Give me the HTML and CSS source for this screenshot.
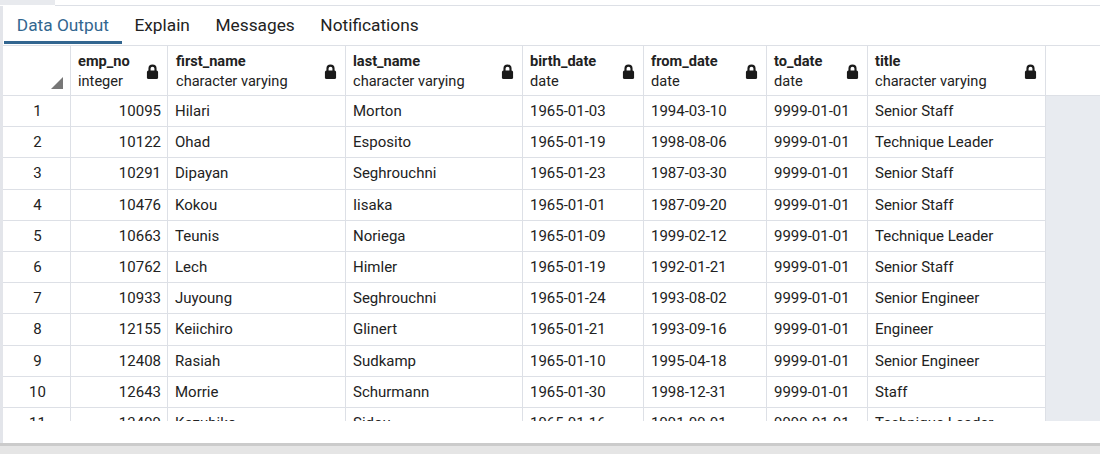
FILE: index.html
```html
<!DOCTYPE html>
<html>
<head>
<meta charset="utf-8">
<link rel="stylesheet" href="styles.css">
</head>
<body>
<div class="app">
  <div class="topbar"><div class="corner"></div><div class="topline"></div></div>
  <div class="main">
    <div class="strip"></div>
    <div class="panel">
      <div class="tabs">
        <div class="tab active">Data Output</div>
        <div class="tab">Explain</div>
        <div class="tab">Messages</div>
        <div class="tab">Notifications</div>
      </div>
      <div class="grid">
        <div class="hrow">
          <div class="hc rn"><span class="sort"></span></div>
          <div class="hc"><div class="ht"><b>emp_no</b><span>integer</span></div><svg class="lock" viewBox="0 0 12 14"><path d="M3.2 6.5V4.3a2.8 2.8 0 0 1 5.6 0V6.5" fill="none" stroke="#1a1a1a" stroke-width="2"/><rect x="0.8" y="6" width="10.4" height="8" rx="1.4" fill="#1a1a1a"/></svg></div>
          <div class="hc"><div class="ht"><b>first_name</b><span>character varying</span></div><svg class="lock" viewBox="0 0 12 14"><path d="M3.2 6.5V4.3a2.8 2.8 0 0 1 5.6 0V6.5" fill="none" stroke="#1a1a1a" stroke-width="2"/><rect x="0.8" y="6" width="10.4" height="8" rx="1.4" fill="#1a1a1a"/></svg></div>
          <div class="hc"><div class="ht"><b>last_name</b><span>character varying</span></div><svg class="lock" viewBox="0 0 12 14"><path d="M3.2 6.5V4.3a2.8 2.8 0 0 1 5.6 0V6.5" fill="none" stroke="#1a1a1a" stroke-width="2"/><rect x="0.8" y="6" width="10.4" height="8" rx="1.4" fill="#1a1a1a"/></svg></div>
          <div class="hc"><div class="ht"><b>birth_date</b><span>date</span></div><svg class="lock" viewBox="0 0 12 14"><path d="M3.2 6.5V4.3a2.8 2.8 0 0 1 5.6 0V6.5" fill="none" stroke="#1a1a1a" stroke-width="2"/><rect x="0.8" y="6" width="10.4" height="8" rx="1.4" fill="#1a1a1a"/></svg></div>
          <div class="hc"><div class="ht"><b>from_date</b><span>date</span></div><svg class="lock" viewBox="0 0 12 14"><path d="M3.2 6.5V4.3a2.8 2.8 0 0 1 5.6 0V6.5" fill="none" stroke="#1a1a1a" stroke-width="2"/><rect x="0.8" y="6" width="10.4" height="8" rx="1.4" fill="#1a1a1a"/></svg></div>
          <div class="hc"><div class="ht"><b>to_date</b><span>date</span></div><svg class="lock" viewBox="0 0 12 14"><path d="M3.2 6.5V4.3a2.8 2.8 0 0 1 5.6 0V6.5" fill="none" stroke="#1a1a1a" stroke-width="2"/><rect x="0.8" y="6" width="10.4" height="8" rx="1.4" fill="#1a1a1a"/></svg></div>
          <div class="hc"><div class="ht"><b>title</b><span>character varying</span></div><svg class="lock" viewBox="0 0 12 14"><path d="M3.2 6.5V4.3a2.8 2.8 0 0 1 5.6 0V6.5" fill="none" stroke="#1a1a1a" stroke-width="2"/><rect x="0.8" y="6" width="10.4" height="8" rx="1.4" fill="#1a1a1a"/></svg></div>
          <div class="hfill"></div>
        </div>
        <div class="body">
          <div class="row"><div class="c rn">1</div><div class="c num">10095</div><div class="c">Hilari</div><div class="c">Morton</div><div class="c">1965-01-03</div><div class="c">1994-03-10</div><div class="c">9999-01-01</div><div class="c">Senior Staff</div></div>
          <div class="row"><div class="c rn">2</div><div class="c num">10122</div><div class="c">Ohad</div><div class="c">Esposito</div><div class="c">1965-01-19</div><div class="c">1998-08-06</div><div class="c">9999-01-01</div><div class="c">Technique Leader</div></div>
          <div class="row"><div class="c rn">3</div><div class="c num">10291</div><div class="c">Dipayan</div><div class="c">Seghrouchni</div><div class="c">1965-01-23</div><div class="c">1987-03-30</div><div class="c">9999-01-01</div><div class="c">Senior Staff</div></div>
          <div class="row"><div class="c rn">4</div><div class="c num">10476</div><div class="c">Kokou</div><div class="c">Iisaka</div><div class="c">1965-01-01</div><div class="c">1987-09-20</div><div class="c">9999-01-01</div><div class="c">Senior Staff</div></div>
          <div class="row"><div class="c rn">5</div><div class="c num">10663</div><div class="c">Teunis</div><div class="c">Noriega</div><div class="c">1965-01-09</div><div class="c">1999-02-12</div><div class="c">9999-01-01</div><div class="c">Technique Leader</div></div>
          <div class="row"><div class="c rn">6</div><div class="c num">10762</div><div class="c">Lech</div><div class="c">Himler</div><div class="c">1965-01-19</div><div class="c">1992-01-21</div><div class="c">9999-01-01</div><div class="c">Senior Staff</div></div>
          <div class="row"><div class="c rn">7</div><div class="c num">10933</div><div class="c">Juyoung</div><div class="c">Seghrouchni</div><div class="c">1965-01-24</div><div class="c">1993-08-02</div><div class="c">9999-01-01</div><div class="c">Senior Engineer</div></div>
          <div class="row"><div class="c rn">8</div><div class="c num">12155</div><div class="c">Keiichiro</div><div class="c">Glinert</div><div class="c">1965-01-21</div><div class="c">1993-09-16</div><div class="c">9999-01-01</div><div class="c">Engineer</div></div>
          <div class="row"><div class="c rn">9</div><div class="c num">12408</div><div class="c">Rasiah</div><div class="c">Sudkamp</div><div class="c">1965-01-10</div><div class="c">1995-04-18</div><div class="c">9999-01-01</div><div class="c">Senior Engineer</div></div>
          <div class="row"><div class="c rn">10</div><div class="c num">12643</div><div class="c">Morrie</div><div class="c">Schurmann</div><div class="c">1965-01-30</div><div class="c">1998-12-31</div><div class="c">9999-01-01</div><div class="c">Staff</div></div>
          <div class="row"><div class="c rn">11</div><div class="c num">13499</div><div class="c">Kazuhiko</div><div class="c">Sidou</div><div class="c">1965-01-16</div><div class="c">1991-09-01</div><div class="c">9999-01-01</div><div class="c">Technique Leader</div></div>
        </div>
      </div>
      <div class="spacer"></div>
    </div>
  </div>
  <div class="bottom"></div>
</div>
</body>
</html>
```

FILE: styles.css
```css
* { box-sizing: border-box; }
html, body { margin: 0; padding: 0; }
body {
  width: 1100px;
  height: 454px;
  overflow: hidden;
  background: #fff;
  font-family: Roboto, "Liberation Sans", sans-serif;
  color: #222;
}
.app { display: flex; flex-direction: column; height: 454px; }
.topbar { display: flex; height: 6px; flex: none; }
.corner { width: 55px; height: 5px; background: #e8eaee; }
.topline { flex: 1; height: 6px; border-bottom: 1px solid #dde0e6; }
.main { display: flex; height: 437px; flex: none; }
.strip { width: 3px; background: #e3e5ea; flex: none; }
.panel { flex: 1; display: flex; flex-direction: column; min-width: 0; }
.tabs {
  display: flex;
  height: 40px;
  padding-left: 1px;
  border-bottom: 1px solid #dde0e6;
  flex: none;
}
.tab {
  height: 38px;
  padding: 0 12.8px;
  font-size: 17.3px;
  line-height: 39px;
  color: #222;
  border-bottom: 3px solid transparent;
}
.tab.active { color: #326690; border-bottom-color: #326690; }
.grid { height: 375px; overflow: hidden; flex: none; }
.hrow {
  display: grid;
  grid-template-columns: 68px 97px 178px 177px 121px 123px 101px 178px 1fr;
  height: 50px;
  border-bottom: 1px solid #dde0e6;
}
.hc {
  position: relative;
  border-right: 1px solid #dde0e6;
  display: flex;
  align-items: center;
  padding: 0 8px 0 7px;
}
.hc:nth-child(3) { padding-left: 8px; }
.ht { flex: 1; display: flex; flex-direction: column; font-size: 14.6px; line-height: 20px; padding-top: 1px; white-space: nowrap; }
.ht b { font-weight: 700; }
.lock { width: 13px; height: 15px; flex: none; margin-top: 2px; }
.sort {
  position: absolute;
  right: 7px;
  bottom: 6px;
  width: 0;
  height: 0;
  border-left: 12px solid transparent;
  border-bottom: 12px solid #777;
}
.body { background: #e8ebf0; height: 325px; }
.row {
  display: grid;
  grid-template-columns: 68px 97px 178px 177px 121px 123px 101px 178px;
  width: 1043px;
  background: #fff;
  height: 31.2px;
}
.c {
  border-right: 1px solid #dde0e6;
  border-bottom: 1px solid #dde0e6;
  font-size: 15px;
  line-height: 30px;
  padding: 0 7px;
  white-space: nowrap;
  overflow: hidden;
}
.c.rn { text-align: center; padding: 0 0 0 2px; }
.c.num { text-align: right; padding-right: 6px; }
.spacer { flex: 1; }
.bottom {
  height: 11px;
  flex: none;
  background: #e5e5e5;
  border-top: 3px solid #cbcbcb;
}
```
